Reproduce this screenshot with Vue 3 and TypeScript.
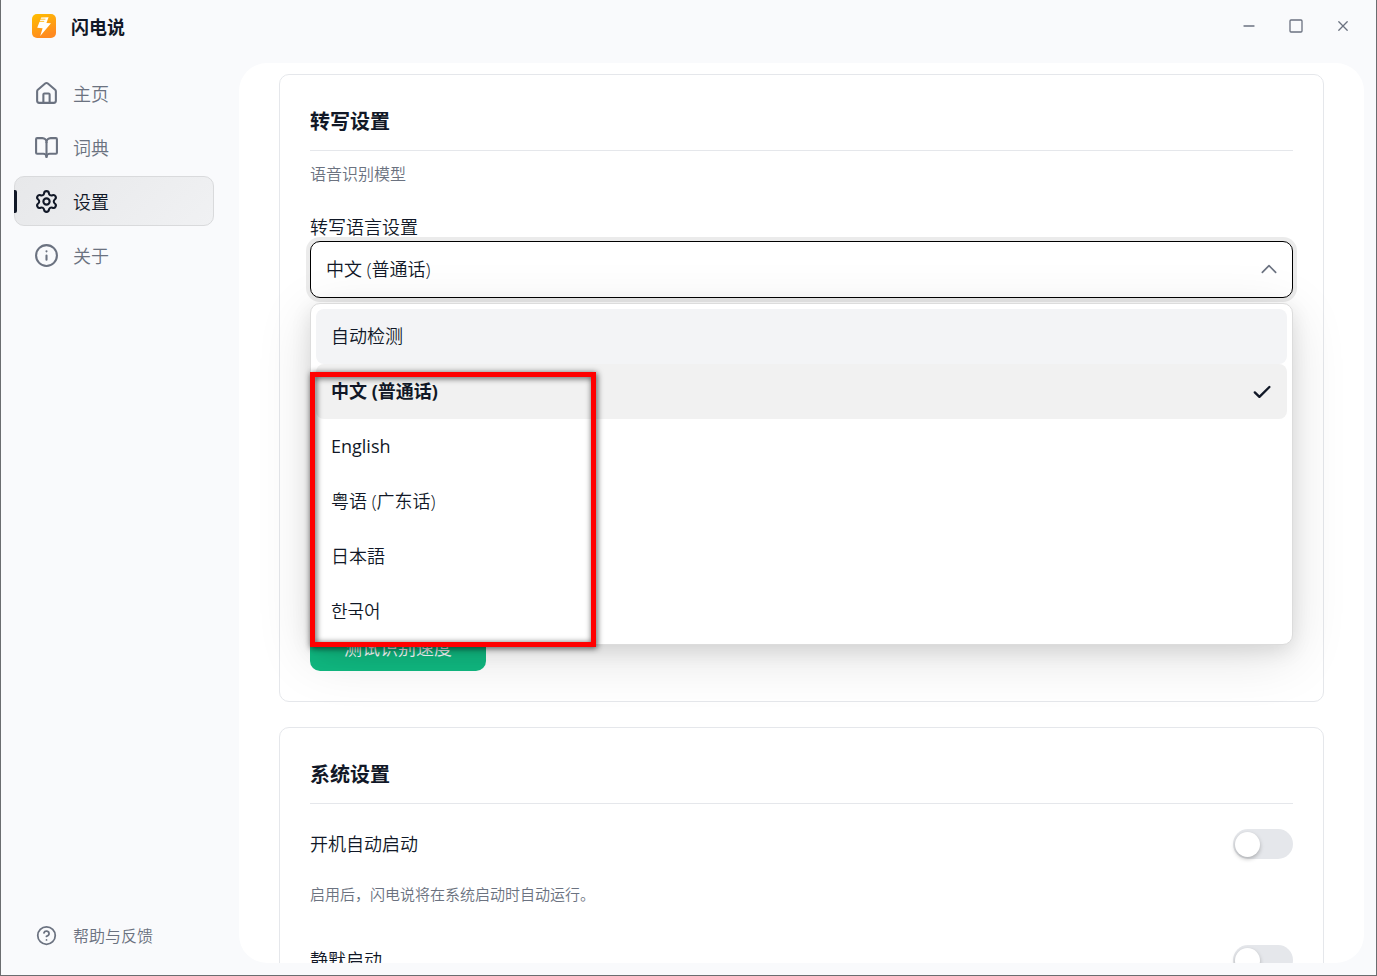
<script setup lang="ts">
import { ref } from 'vue'

type IconName = 'home' | 'book' | 'gear' | 'info'

interface NavItem {
  id: string
  label: string
  icon: IconName
}

interface Language {
  value: string
  label: string
}

const navItems: NavItem[] = [
  { id: 'home', label: '主页', icon: 'home' },
  { id: 'dictionary', label: '词典', icon: 'book' },
  { id: 'settings', label: '设置', icon: 'gear' },
  { id: 'about', label: '关于', icon: 'info' },
]

const languages: Language[] = [
  { value: 'auto', label: '自动检测' },
  { value: 'zh', label: '中文 (普通话)' },
  { value: 'en', label: 'English' },
  { value: 'yue', label: '粤语 (广东话)' },
  { value: 'ja', label: '日本語' },
  { value: 'ko', label: '한국어' },
]

const activePage = ref('settings')
const language = ref('zh')
const highlighted = ref('auto')
const autoStart = ref(false)
const silentStart = ref(false)
</script>

<template>
  <div class="window">
    <header class="titlebar">
      <div class="brand">
        <svg class="logo" viewBox="0 0 24 24" aria-hidden="true">
          <defs>
            <linearGradient id="logo-fill" x1="0" y1="0" x2="0.4" y2="1">
              <stop offset="0" stop-color="#ffbf00" />
              <stop offset="1" stop-color="#ff8a20" />
            </linearGradient>
          </defs>
          <rect width="24" height="24" rx="5" fill="url(#logo-fill)" />
          <path d="M9.2 3.4 16.6 3.2 14.4 9 19 9.2 8.2 22 10.6 14.2 5.2 13.8Z" fill="#fff" />
          <path d="M8 5.2H13M7.4 7.4h4.4" stroke="#ffb000" stroke-width="0.8" />
        </svg>
        <h1>闪电说</h1>
      </div>
      <div class="controls">
        <button type="button" aria-label="最小化">
          <svg viewBox="0 0 16 16"><path d="M3 8h10" /></svg>
        </button>
        <button type="button" aria-label="最大化">
          <svg viewBox="0 0 16 16"><rect x="2" y="2" width="12" height="12" rx="1" /></svg>
        </button>
        <button type="button" aria-label="关闭">
          <svg viewBox="0 0 16 16"><path d="m3.8 3.8 8.4 8.4M12.2 3.8l-8.4 8.4" /></svg>
        </button>
      </div>
    </header>

    <aside class="sidebar">
      <nav>
        <button
          v-for="item in navItems"
          :key="item.id"
          type="button"
          class="nav-item"
          :class="{ active: item.id === activePage }"
          @click="activePage = item.id"
        >
          <svg viewBox="0 0 24 24" aria-hidden="true">
            <template v-if="item.icon === 'home'">
              <path d="M15 21v-8a1 1 0 0 0-1-1h-4a1 1 0 0 0-1 1v8" />
              <path d="M3 10a2 2 0 0 1 .709-1.528l7-6a2 2 0 0 1 2.582 0l7 6A2 2 0 0 1 21 10v9a2 2 0 0 1-2 2H5a2 2 0 0 1-2-2z" />
            </template>
            <template v-else-if="item.icon === 'book'">
              <path d="M12 7v14" />
              <path d="M3 18a1 1 0 0 1-1-1V4a1 1 0 0 1 1-1h5a4 4 0 0 1 4 4 4 4 0 0 1 4-4h5a1 1 0 0 1 1 1v13a1 1 0 0 1-1 1h-6a3 3 0 0 0-3 3 3 3 0 0 0-3-3z" />
            </template>
            <template v-else-if="item.icon === 'gear'">
              <path d="M9.671 4.136a2.34 2.34 0 0 1 4.659 0 2.34 2.34 0 0 0 3.319 1.915 2.34 2.34 0 0 1 2.33 4.033 2.34 2.34 0 0 0 0 3.831 2.34 2.34 0 0 1-2.33 4.033 2.34 2.34 0 0 0-3.319 1.915 2.34 2.34 0 0 1-4.659 0 2.34 2.34 0 0 0-3.32-1.915 2.34 2.34 0 0 1-2.33-4.033 2.34 2.34 0 0 0 0-3.831A2.34 2.34 0 0 1 6.35 6.051a2.34 2.34 0 0 0 3.319-1.915" />
              <circle cx="12" cy="12" r="3" />
            </template>
            <template v-else>
              <circle cx="12" cy="12" r="10" />
              <path d="M12 16v-4M12 8h.01" />
            </template>
          </svg>
          <span>{{ item.label }}</span>
        </button>
      </nav>
      <button type="button" class="nav-item help">
        <svg viewBox="0 0 24 24" aria-hidden="true">
          <circle cx="12" cy="12" r="10" />
          <path d="M9.09 9a3 3 0 0 1 5.83 1c0 2-3 3-3 3M12 17h.01" />
        </svg>
        <span>帮助与反馈</span>
      </button>
    </aside>

    <main class="panel">
      <section class="card transcription">
        <h2>转写设置</h2>
        <p class="caption">语音识别模型</p>
        <label class="field-label" for="language">转写语言设置</label>
        <div class="dropdown">
          <select id="language" v-model="language">
            <option v-for="lang in languages" :key="lang.value" :value="lang.value">{{ lang.label }}</option>
          </select>
          <svg class="chevron" viewBox="0 0 24 24" aria-hidden="true"><path d="m4 16 8-8 8 8" /></svg>
          <ul class="menu" role="listbox" aria-label="转写语言设置">
            <li
              v-for="lang in languages"
              :key="lang.value"
              role="option"
              :lang="lang.value"
              :aria-selected="lang.value === language"
              :class="{ selected: lang.value === language, highlighted: lang.value === highlighted }"
              @mouseenter="highlighted = lang.value"
              @click="language = lang.value"
            >
              <span>{{ lang.label }}</span>
              <svg v-if="lang.value === language" viewBox="0 0 20 20" aria-hidden="true">
                <path d="m2.8 10.4 4.6 4.4L17.4 5" />
              </svg>
            </li>
          </ul>
          <div class="marker" aria-hidden="true"></div>
        </div>
        <button type="button" class="primary">测试识别速度</button>
      </section>

      <section class="card">
        <h2>系统设置</h2>
        <div class="setting">
          <label for="auto-start">开机自动启动</label>
          <input id="auto-start" v-model="autoStart" type="checkbox" role="switch" />
        </div>
        <p class="hint">启用后，闪电说将在系统启动时自动运行。</p>
        <div class="setting">
          <label for="silent-start">静默启动</label>
          <input id="silent-start" v-model="silentStart" type="checkbox" role="switch" />
        </div>
      </section>
    </main>
  </div>
</template>

<style>
body {
  margin: 0;
}
</style>

<style scoped>
.window {
  box-sizing: border-box;
  display: grid;
  grid-template-columns: 238px minmax(0, 1fr);
  grid-template-rows: 63px minmax(0, 1fr);
  height: 100vh;
  overflow: hidden;
  border: 1px solid #6b6d70;
  border-top: 0;
  background: #f9fafc;
  color: #111827;
  font-family: "Open Sans", "Noto Sans CJK SC", "Noto Sans CJK KR", sans-serif;
  font-size: 18px;
  font-weight: 350;
  line-height: 24px;
}

button,
select {
  font: inherit;
  color: inherit;
}

button {
  border: 0;
  background: none;
  cursor: pointer;
}

svg {
  fill: none;
  stroke: currentColor;
  stroke-width: 2;
  stroke-linecap: round;
  stroke-linejoin: round;
}

h1,
h2,
p,
ul {
  margin: 0;
  padding: 0;
}

.titlebar {
  grid-column: 1 / -1;
  display: flex;
  justify-content: space-between;
  align-items: center;
  padding: 0 10px 12px 31px;
}

.brand {
  display: flex;
  align-items: center;
  gap: 15px;
}

.logo {
  width: 24px;
  height: 24px;
  stroke: none;
}

h1 {
  padding-top: 2px;
  font-size: 18px;
  font-weight: 700;
}

.controls {
  display: flex;
  color: #6b7280;
}

.controls button {
  display: grid;
  place-items: center;
  width: 47px;
  height: 40px;
  padding: 0;
}

.controls svg {
  width: 16px;
  height: 16px;
  stroke-width: 1.3;
}

.sidebar {
  display: flex;
  flex-direction: column;
  justify-content: space-between;
  padding: 5px 25px 15px 13px;
}

nav {
  display: grid;
  gap: 4px;
}

.nav-item {
  position: relative;
  display: flex;
  align-items: center;
  gap: 14px;
  width: 100%;
  height: 50px;
  padding: 0 19px;
  border: 1px solid transparent;
  border-radius: 10px;
  color: #6b7280;
  text-align: left;
}

.nav-item svg {
  width: 25px;
  height: 25px;
}

.nav-item span {
  padding-top: 2px;
}

.nav-item.active {
  border-color: #d9dadc;
  background: linear-gradient(135deg, #e7e8ea, #f0f1f3);
  color: #111827;
}

.nav-item.active::before {
  content: "";
  position: absolute;
  left: -1px;
  top: 13px;
  width: 3px;
  height: 23px;
  border-radius: 0 2px 2px 0;
  background: #111827;
}

.nav-item.help {
  gap: 16px;
  padding: 0 21px;
  font-size: 16px;
}

.nav-item.help svg {
  width: 21px;
  height: 21px;
}

.panel {
  display: flex;
  flex-direction: column;
  gap: 25px;
  margin: 0 12px 12px 0;
  padding: 11px 40px 0;
  overflow: hidden;
  border-radius: 28px;
  background: #fff;
}

.card {
  flex: none;
  display: flex;
  flex-direction: column;
  padding: 30px;
  border: 1px solid #e5e7eb;
  border-radius: 10px;
  background: #fff;
}

.transcription {
  box-sizing: border-box;
  min-height: 628px;
}

h2 {
  padding: 1px 0 12px;
  border-bottom: 1px solid #e5e7eb;
  font-size: 20px;
  font-weight: 700;
  line-height: 32px;
}

.caption {
  margin-top: 11px;
  color: #6b7280;
  font-size: 16px;
}

.field-label {
  margin-top: 29px;
}

.dropdown {
  position: relative;
  z-index: 1;
  display: grid;
  margin-top: 2px;
}

select {
  appearance: none;
  height: 57px;
  padding: 0 48px 2px 15px;
  border: 1px solid #000;
  border-radius: 10px;
  outline: 0;
  background: #fff;
  box-shadow: 0 0 0 4px rgba(0, 0, 0, 0.08);
}

.chevron {
  position: absolute;
  right: 14px;
  top: 18px;
  width: 20px;
  height: 20px;
  color: #6b7280;
  pointer-events: none;
}

.menu {
  position: absolute;
  top: calc(100% + 5px);
  left: 0;
  right: 0;
  padding: 5px;
  border: 1px solid #dcdcdc;
  border-radius: 10px;
  background: #fff;
  box-shadow:
    0 12px 56px rgba(0, 0, 0, 0.12),
    0 6px 20px rgba(0, 0, 0, 0.1);
  list-style: none;
}

.menu li {
  display: flex;
  align-items: center;
  justify-content: space-between;
  height: 55px;
  padding: 0 15px;
  border-radius: 8px;
  cursor: pointer;
}

.menu li.highlighted {
  background: #f3f4f6;
}

.menu li:lang(en) {
  font-weight: 400;
}

.menu li.selected {
  background: #f1f1f1;
  font-weight: 700;
}

.menu span {
  padding-bottom: 2px;
}

.menu svg {
  width: 20px;
  height: 20px;
  stroke-width: 2.4;
}

.marker {
  position: absolute;
  top: 131px;
  left: 0;
  box-sizing: border-box;
  width: 286px;
  height: 275px;
  border: 5px solid #f00;
  filter: drop-shadow(1px 1px 3px rgba(0, 0, 0, 0.75));
  pointer-events: none;
}

.primary {
  align-self: flex-start;
  height: 45px;
  margin-top: auto;
  padding: 0 34px 2px;
  border-radius: 10px;
  background: #10b981;
  color: #fff;
}

.setting {
  display: flex;
  align-items: center;
  justify-content: space-between;
  height: 30px;
  margin-top: 25px;
}

.hint {
  margin-top: 23px;
  color: #6b7280;
  font-size: 15px;
}

.hint + .setting {
  margin-top: 39px;
}

input[role="switch"] {
  appearance: none;
  display: flex;
  align-items: center;
  width: 60px;
  height: 30px;
  margin: 0;
  padding: 0 2px;
  border-radius: 15px;
  background: #e5e7eb;
  cursor: pointer;
}

input[role="switch"]::before {
  content: "";
  width: 25px;
  height: 25px;
  border-radius: 50%;
  background: #fff;
  box-shadow: 0 2px 4px rgba(0, 0, 0, 0.25);
}

input[role="switch"]:checked {
  justify-content: flex-end;
  background: #111827;
}
</style>
